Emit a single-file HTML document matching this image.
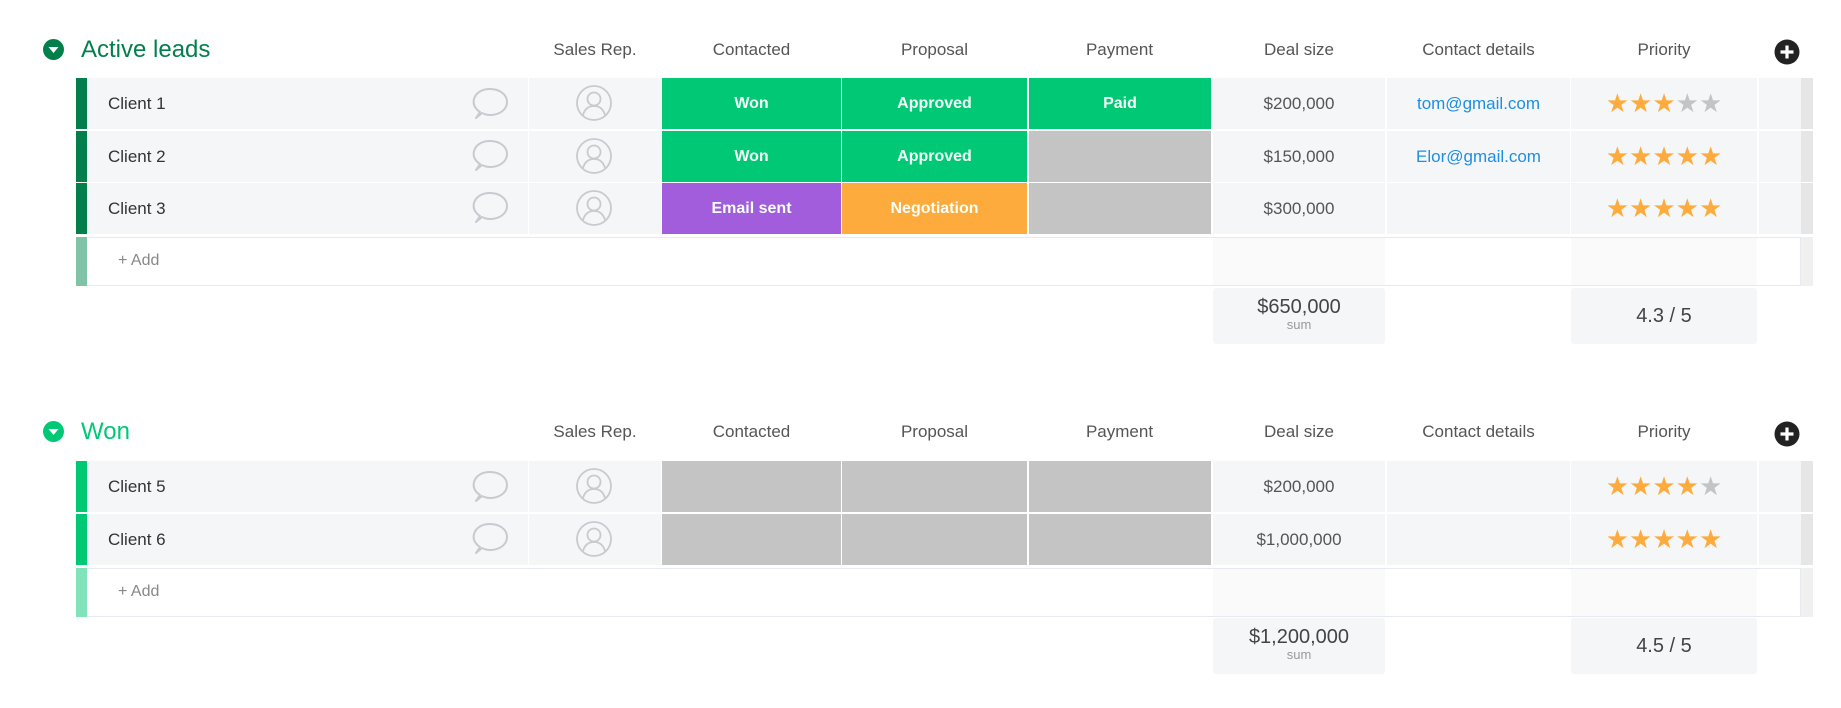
<!DOCTYPE html>
<html><head><meta charset="utf-8">
<style>
*{margin:0;padding:0;box-sizing:border-box}
body{width:1841px;height:708px;background:#fff;position:relative;overflow:hidden;font-family:"Liberation Sans",sans-serif;color:#333}
.a{position:absolute}
.h{position:absolute;font-size:17px;color:#555;text-align:center;white-space:nowrap}
.c{position:absolute;background:#f5f6f8;display:flex;align-items:center;justify-content:center;font-size:17px;color:#555}
.s{color:#fff;font-weight:bold;font-size:16px;color:#f4fff9}
.g{background:#c4c4c4}
.gr{background:#00c875}
.st{font-size:26px;letter-spacing:0px;color:#fdab3d}
.st i{font-style:normal;color:#c4c4c4}
.em{color:#1e8fe1}
.title{position:absolute;font-size:24px}
.sum{position:absolute;background:#f5f6f8;border-radius:3px;text-align:center}
</style></head><body>

<svg class="a" style="left:43px;top:39px" width="21" height="21" viewBox="0 0 21 21"><circle cx="10.5" cy="10.5" r="10.5" fill="#037f4c"/><path d="M5.5 8h10l-5 6z" fill="#fff"/></svg>
<div class="title" style="left:81px;top:36px;color:#037f4c">Active leads</div>
<div class="h" style="left:529px;width:132px;top:40px">Sales Rep.</div>
<div class="h" style="left:662px;width:179px;top:40px">Contacted</div>
<div class="h" style="left:842px;width:185px;top:40px">Proposal</div>
<div class="h" style="left:1029px;width:181px;top:40px">Payment</div>
<div class="h" style="left:1213px;width:172px;top:40px">Deal size</div>
<div class="h" style="left:1387px;width:183px;top:40px">Contact details</div>
<div class="h" style="left:1571px;width:186px;top:40px">Priority</div>
<svg class="a" style="left:1774px;top:39px" width="26" height="26" viewBox="0 0 26 26"><circle cx="13" cy="13" r="12.5" fill="#222"/><path d="M13 6.5v13M6.5 13h13" stroke="#fff" stroke-width="3.2"/></svg>

<div class="a" style="left:76px;top:78px;width:11px;height:51px;background:#037f4c"></div>
<div class="c" style="left:87px;top:78px;width:441px;height:51px;justify-content:flex-start;padding-left:21px;color:#333">Client 1</div>
<div class="c" style="left:529px;top:78px;width:132px;height:51px"></div>
<div class="c gr s" style="left:662px;top:78px;width:179px;height:51px">Won</div>
<div class="c gr s" style="left:842px;top:78px;width:185px;height:51px">Approved</div>
<div class="c gr s" style="left:1029px;top:78px;width:182px;height:51px">Paid</div>
<div class="c" style="left:1213px;top:78px;width:172px;height:51px">$200,000</div>
<div class="c em" style="left:1387px;top:78px;width:183px;height:51px">tom@gmail.com</div>
<div class="c st" style="left:1571px;top:78px;width:186px;height:51px">★★★<i>★★</i></div>
<div class="c" style="left:1759px;top:78px;width:42px;height:51px"></div>
<div class="a" style="left:1801px;top:78px;width:12px;height:51px;background:#e6e6e6"></div>

<div class="a" style="left:76px;top:131px;width:11px;height:51px;background:#037f4c"></div>
<div class="c" style="left:87px;top:131px;width:441px;height:51px;justify-content:flex-start;padding-left:21px;color:#333">Client 2</div>
<div class="c" style="left:529px;top:131px;width:132px;height:51px"></div>
<div class="c gr s" style="left:662px;top:131px;width:179px;height:51px">Won</div>
<div class="c gr s" style="left:842px;top:131px;width:185px;height:51px">Approved</div>
<div class="c g" style="left:1029px;top:131px;width:182px;height:51px"></div>
<div class="c" style="left:1213px;top:131px;width:172px;height:51px">$150,000</div>
<div class="c em" style="left:1387px;top:131px;width:183px;height:51px">Elor@gmail.com</div>
<div class="c st" style="left:1571px;top:131px;width:186px;height:51px">★★★★★</div>
<div class="c" style="left:1759px;top:131px;width:42px;height:51px"></div>
<div class="a" style="left:1801px;top:131px;width:12px;height:51px;background:#e6e6e6"></div>

<div class="a" style="left:76px;top:183px;width:11px;height:51px;background:#037f4c"></div>
<div class="c" style="left:87px;top:183px;width:441px;height:51px;justify-content:flex-start;padding-left:21px;color:#333">Client 3</div>
<div class="c" style="left:529px;top:183px;width:132px;height:51px"></div>
<div class="c s" style="left:662px;top:183px;width:179px;height:51px;background:#a25ddc">Email sent</div>
<div class="c s" style="left:842px;top:183px;width:185px;height:51px;background:#fdab3d">Negotiation</div>
<div class="c g" style="left:1029px;top:183px;width:182px;height:51px"></div>
<div class="c" style="left:1213px;top:183px;width:172px;height:51px">$300,000</div>
<div class="c" style="left:1387px;top:183px;width:183px;height:51px"></div>
<div class="c st" style="left:1571px;top:183px;width:186px;height:51px">★★★★★</div>
<div class="c" style="left:1759px;top:183px;width:42px;height:51px"></div>
<div class="a" style="left:1801px;top:183px;width:12px;height:51px;background:#e6e6e6"></div>

<div class="a" style="left:76px;top:237px;width:11px;height:49px;background:#80c3a7"></div>
<div class="a" style="left:87px;top:237px;width:1714px;height:49px;border:1px solid #e6e9ef;border-left:none;background:#fff"></div>
<div class="a" style="left:1213px;top:238px;width:172px;height:47px;background:#fafafb"></div>
<div class="a" style="left:1571px;top:238px;width:186px;height:47px;background:#fafafb"></div>
<div class="a" style="left:1801px;top:237px;width:12px;height:49px;background:#f0f0f0"></div>
<div class="a" style="left:118px;top:252px;font-size:16px;color:#888">+ Add</div>
<div class="sum" style="left:1213px;top:288px;width:172px;height:56px"><div style="font-size:20px;color:#444;margin-top:8px">$650,000</div><div style="font-size:13px;color:#999;margin-top:-2px">sum</div></div>
<div class="sum" style="left:1571px;top:288px;width:186px;height:56px;display:flex;align-items:center;justify-content:center;font-size:20px;color:#444">4.3 / 5</div>

<svg class="a" style="left:43px;top:421px" width="21" height="21" viewBox="0 0 21 21"><circle cx="10.5" cy="10.5" r="10.5" fill="#00c875"/><path d="M5.5 8h10l-5 6z" fill="#fff"/></svg>
<div class="title" style="left:81px;top:418px;color:#00c875">Won</div>
<div class="h" style="left:529px;width:132px;top:422px">Sales Rep.</div>
<div class="h" style="left:662px;width:179px;top:422px">Contacted</div>
<div class="h" style="left:842px;width:185px;top:422px">Proposal</div>
<div class="h" style="left:1029px;width:181px;top:422px">Payment</div>
<div class="h" style="left:1213px;width:172px;top:422px">Deal size</div>
<div class="h" style="left:1387px;width:183px;top:422px">Contact details</div>
<div class="h" style="left:1571px;width:186px;top:422px">Priority</div>
<svg class="a" style="left:1774px;top:421px" width="26" height="26" viewBox="0 0 26 26"><circle cx="13" cy="13" r="12.5" fill="#222"/><path d="M13 6.5v13M6.5 13h13" stroke="#fff" stroke-width="3.2"/></svg>

<div class="a" style="left:76px;top:461px;width:11px;height:51px;background:#00c875"></div>
<div class="c" style="left:87px;top:461px;width:441px;height:51px;justify-content:flex-start;padding-left:21px;color:#333">Client 5</div>
<div class="c" style="left:529px;top:461px;width:132px;height:51px"></div>
<div class="c g" style="left:662px;top:461px;width:179px;height:51px"></div>
<div class="c g" style="left:842px;top:461px;width:185px;height:51px"></div>
<div class="c g" style="left:1029px;top:461px;width:182px;height:51px"></div>
<div class="c" style="left:1213px;top:461px;width:172px;height:51px">$200,000</div>
<div class="c" style="left:1387px;top:461px;width:183px;height:51px"></div>
<div class="c st" style="left:1571px;top:461px;width:186px;height:51px">★★★★<i>★</i></div>
<div class="c" style="left:1759px;top:461px;width:42px;height:51px"></div>
<div class="a" style="left:1801px;top:461px;width:12px;height:51px;background:#e6e6e6"></div>

<div class="a" style="left:76px;top:514px;width:11px;height:51px;background:#00c875"></div>
<div class="c" style="left:87px;top:514px;width:441px;height:51px;justify-content:flex-start;padding-left:21px;color:#333">Client 6</div>
<div class="c" style="left:529px;top:514px;width:132px;height:51px"></div>
<div class="c g" style="left:662px;top:514px;width:179px;height:51px"></div>
<div class="c g" style="left:842px;top:514px;width:185px;height:51px"></div>
<div class="c g" style="left:1029px;top:514px;width:182px;height:51px"></div>
<div class="c" style="left:1213px;top:514px;width:172px;height:51px">$1,000,000</div>
<div class="c" style="left:1387px;top:514px;width:183px;height:51px"></div>
<div class="c st" style="left:1571px;top:514px;width:186px;height:51px">★★★★★</div>
<div class="c" style="left:1759px;top:514px;width:42px;height:51px"></div>
<div class="a" style="left:1801px;top:514px;width:12px;height:51px;background:#e6e6e6"></div>

<div class="a" style="left:76px;top:568px;width:11px;height:49px;background:#80e3ba"></div>
<div class="a" style="left:87px;top:568px;width:1714px;height:49px;border:1px solid #e6e9ef;border-left:none;background:#fff"></div>
<div class="a" style="left:1213px;top:569px;width:172px;height:47px;background:#fafafb"></div>
<div class="a" style="left:1571px;top:569px;width:186px;height:47px;background:#fafafb"></div>
<div class="a" style="left:1801px;top:568px;width:12px;height:49px;background:#f0f0f0"></div>
<div class="a" style="left:118px;top:583px;font-size:16px;color:#888">+ Add</div>
<div class="sum" style="left:1213px;top:618px;width:172px;height:56px"><div style="font-size:20px;color:#444;margin-top:8px">$1,200,000</div><div style="font-size:13px;color:#999;margin-top:-2px">sum</div></div>
<div class="sum" style="left:1571px;top:618px;width:186px;height:56px;display:flex;align-items:center;justify-content:center;font-size:20px;color:#444">4.5 / 5</div>

<svg class="a" style="left:0;top:0" width="1841" height="708">
<defs>
<g id="cm"><path d="M3 30 L7 24 C1 20 0 15 1 11 C3 4 10 1 17 1 C26 1 34 6 34 14 C34 22 26 27 17 27 C14 27 11 26 9 25 Z" fill="none" stroke="#c8cacf" stroke-width="2" stroke-linejoin="round"/></g>
<g id="av"><circle cx="18" cy="18" r="17" fill="none" stroke="#c8cacf" stroke-width="1.8"/><circle cx="18" cy="14" r="6.5" fill="none" stroke="#c8cacf" stroke-width="1.8"/><path d="M7 30 C9 23 13 21 18 21 C23 21 27 23 29 30" fill="none" stroke="#c8cacf" stroke-width="1.8"/></g>
</defs>
<use href="#cm" x="473" y="88"/><use href="#av" x="576" y="85"/>
<use href="#cm" x="473" y="140"/><use href="#av" x="576" y="138"/>
<use href="#cm" x="473" y="192"/><use href="#av" x="576" y="190"/>
<use href="#cm" x="473" y="471"/><use href="#av" x="576" y="468"/>
<use href="#cm" x="473" y="523"/><use href="#av" x="576" y="521"/>
</svg>
</body></html>
